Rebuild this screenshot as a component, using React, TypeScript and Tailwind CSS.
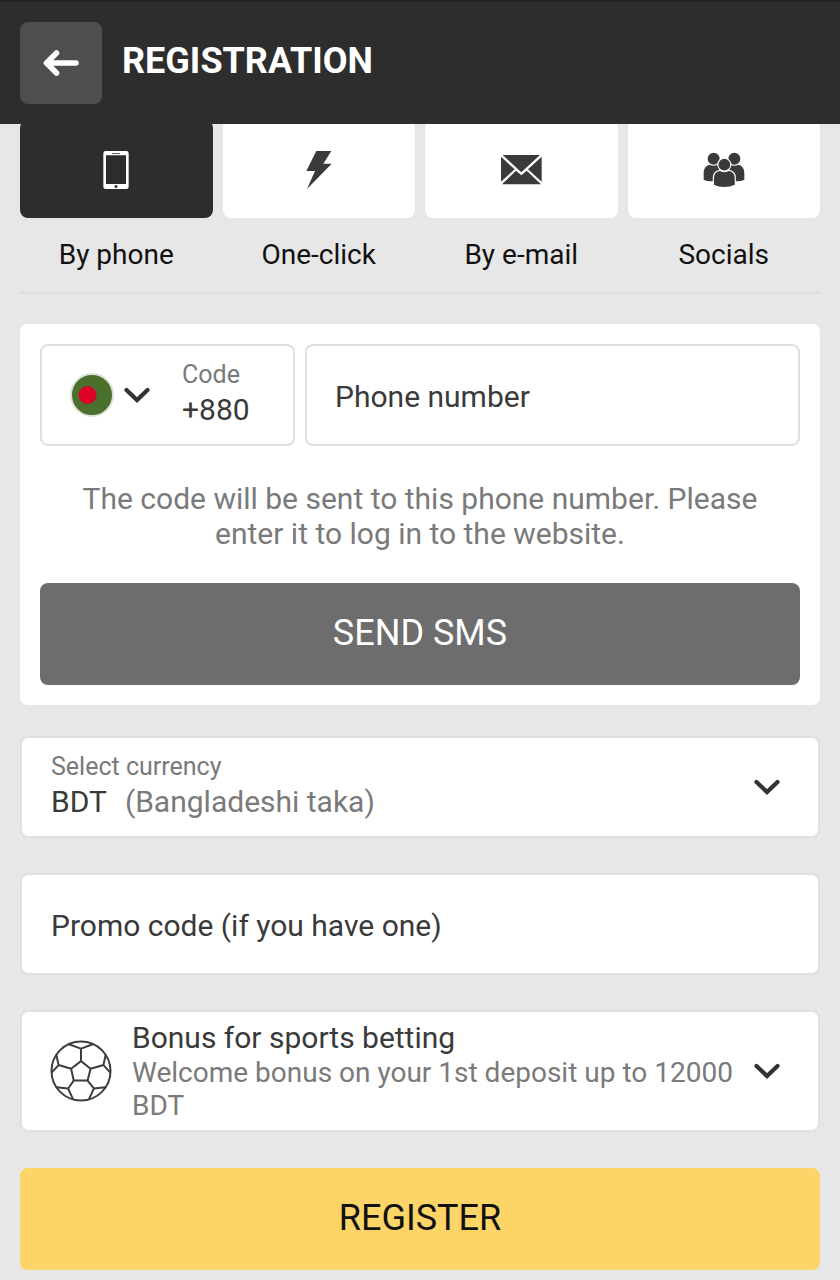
import { useState } from "react";
import type { ReactNode } from "react";

function ArrowIcon() {
  return (
    <svg width="36" height="26" viewBox="0 0 36 26" fill="none" aria-hidden="true">
      <path
        d="M33 13H3.500M13.500 3L3.500 13l10 10"
        stroke="white"
        strokeWidth="5.6"
        strokeLinecap="round"
        strokeLinejoin="round"
      />
    </svg>
  );
}

function ChevronIcon() {
  return (
    <svg
      className="shrink-0"
      width="26"
      height="16"
      viewBox="0 0 26 16"
      fill="none"
      aria-hidden="true"
    >
      <path d="M2.500 3L13 13L23.500 3" stroke="#333333" strokeWidth="4.2" strokeLinecap="round" />
    </svg>
  );
}

function PhoneIcon() {
  return (
    <svg width="26" height="38" viewBox="0 0 78 114" aria-hidden="true">
      <path
        fill="currentColor"
        fillRule="evenodd"
        d="M8 0h62a7 7 0 0 1 7 7v100a7 7 0 0 1-7 7H8a7 7 0 0 1-7-7V7a7 7 0 0 1 7-7ZM9 13v86h60V13ZM27 6v2h24V6ZM39 102a4.500 4.500 0 1 0 0 9a4.500 4.500 0 1 0 0-9Z"
      />
    </svg>
  );
}

function BoltIcon() {
  return (
    <svg width="26" height="38" viewBox="0 0 78 114" aria-hidden="true">
      <path fill="currentColor" d="M31 0H76L52 38H77L3 114L27 60H1Z" />
    </svg>
  );
}

function MailIcon() {
  return (
    <svg width="41" height="30" viewBox="0 0 123 90" aria-hidden="true">
      <path fill="currentColor" d="M5 0H117L61 52Z" />
      <path fill="currentColor" d="M0 5L41 43L0 80Z" />
      <path fill="currentColor" d="M122 5L81 43L122 80Z" />
      <path fill="currentColor" d="M45 47L61 61L77 47L120 88H3Z" />
    </svg>
  );
}

function PeopleIcon() {
  return (
    <svg width="42" height="36" viewBox="0 0 126 108" aria-hidden="true">
      <g fill="currentColor">
        <circle cx="32" cy="20" r="18" />
        <circle cx="94" cy="20" r="18" />
        <path d="M2 83V64C2 49 9 41 20 38Q32 44 44 38L64 60L82 38Q94 44 106 38C117 41 124 49 124 64V83Q110 90 92 87H34Q16 90 2 83Z" />
      </g>
      <g fill="currentColor" stroke="white" strokeWidth="3.5">
        <path d="M31 100V78C31 65 38 57 50 55Q64 63 78 55C90 57 97 65 97 78V100Q64 114 31 100Z" />
        <circle cx="64" cy="38" r="19.500" />
      </g>
    </svg>
  );
}

function BallIcon() {
  return (
    <svg
      className="shrink-0"
      width="62"
      height="62"
      viewBox="0 0 188 188"
      fill="none"
      stroke="#3d3d3d"
      strokeWidth="6"
      strokeLinejoin="round"
      aria-hidden="true"
    >
      <circle cx="94" cy="94" r="89.500" />
      <path d="M94 64L123 87L114 123H72L64 87Z" />
      <path d="M94 64V26M55 12L94 26L132 12" />
      <path d="M123 87L162 76M169 44L162 76L183 99" />
      <path d="M64 87L26 76M19 44L26 76L5 99" />
      <path d="M114 123L133 147M168 143L133 147L118 180" />
      <path d="M72 123L55 147M20 143L55 147L70 180" />
    </svg>
  );
}

function FlagIcon() {
  return (
    <svg className="shrink-0" width="44" height="44" viewBox="0 0 44 44" aria-hidden="true">
      <circle cx="22" cy="22" r="21" fill="#4b6f2c" stroke="#dde3d9" strokeWidth="2" />
      <circle cx="17.500" cy="22" r="9" fill="#dc0228" />
    </svg>
  );
}

const methods: { id: string; label: string; icon: ReactNode }[] = [
  { id: "phone", label: "By phone", icon: <PhoneIcon /> },
  { id: "click", label: "One-click", icon: <BoltIcon /> },
  { id: "email", label: "By e-mail", icon: <MailIcon /> },
  { id: "socials", label: "Socials", icon: <PeopleIcon /> },
];

const currencies = [
  { code: "BDT", name: "Bangladeshi taka" },
  { code: "USD", name: "US dollar" },
  { code: "EUR", name: "Euro" },
];

const bonuses = [
  {
    title: "Bonus for sports betting",
    text: "Welcome bonus on your 1st deposit up to 12000 BDT",
  },
  { title: "No bonus", text: "Continue without a bonus" },
];

export default function App() {
  const [method, setMethod] = useState("phone");
  const [currency, setCurrency] = useState(0);
  const [bonus, setBonus] = useState(0);

  return (
    <div className="min-h-screen bg-[#e7e7e7] font-['Roboto',sans-serif] text-[30px] leading-[35px] text-[#3a3a3a]">
      <header className="sticky top-0 z-10 flex items-center gap-5 border-t-2 border-[#222222] bg-[#2d2d2d] p-5">
        <button
          type="button"
          aria-label="Back"
          className="flex size-[82px] items-center justify-center rounded-lg bg-[#4e4e4e]"
        >
          <ArrowIcon />
        </button>
        <h1 className="pb-1 text-[36px] leading-[42px] font-bold text-white">REGISTRATION</h1>
      </header>

      <main className="-mt-1 px-5 pb-[10px]">
        <nav className="grid grid-cols-4 gap-[10px] border-b-2 border-[#dedede] pb-5">
          {methods.map((m) => (
            <button
              key={m.id}
              type="button"
              aria-pressed={method === m.id}
              onClick={() => setMethod(m.id)}
              className="flex flex-col gap-5 text-[28px] leading-[34px] text-[#111111]"
            >
              <span
                className={
                  method === m.id
                    ? "flex h-[98px] w-full items-center justify-center rounded-lg bg-[#2d2d2d] pt-0.5 text-white"
                    : "flex h-[98px] w-full items-center justify-center rounded-lg bg-white pt-0.5 text-[#3a3a3a]"
                }
              >
                {m.icon}
              </span>
              <span className="w-full text-center">{m.label}</span>
            </button>
          ))}
        </nav>

        <form onSubmit={(e) => e.preventDefault()}>
          <section className="mt-[30px] rounded-lg bg-white p-5">
            <div className="flex gap-[10px]">
              <div className="relative flex h-[102px] w-[255px] shrink-0 items-center rounded-lg border-2 border-[#e0e0e0] pl-7">
                <FlagIcon />
                <span className="ml-[10px]">
                  <ChevronIcon />
                </span>
                <div className="ml-8 flex flex-col pb-1.5">
                  <label htmlFor="code" className="text-[25px] text-[#7a7a7a]">
                    Code
                  </label>
                  <span>+880</span>
                </div>
                <select id="code" className="absolute inset-0 cursor-pointer opacity-0">
                  <option>+880</option>
                </select>
              </div>
              <input
                type="tel"
                aria-label="Phone number"
                placeholder="Phone number"
                className="h-[102px] min-w-0 flex-1 rounded-lg border-2 border-[#e0e0e0] px-7 pt-0.5 placeholder:text-[#3a3a3a]"
              />
            </div>
            <p className="mt-[35px] px-5 text-center text-[#7a7a7a]">
              The code will be sent to this phone number. Please enter it to log in to the website.
            </p>
            <button
              type="button"
              className="mt-8 h-[102px] w-full rounded-lg bg-[#6d6d6d] pb-0.5 text-[36px] text-white"
            >
              SEND SMS
            </button>
          </section>

          <div className="relative mt-[31px] flex h-[102px] items-center justify-between rounded-lg border-2 border-[#e0e0e0] bg-white pr-[38px] pl-[29px]">
            <div className="flex flex-col pb-1.5">
              <label htmlFor="currency" className="text-[25px] text-[#7a7a7a]">
                Select currency
              </label>
              <span className="flex gap-[18px]">
                {currencies[currency].code}
                <span className="text-[#7a7a7a]">({currencies[currency].name})</span>
              </span>
            </div>
            <ChevronIcon />
            <select
              id="currency"
              value={currency}
              onChange={(e) => setCurrency(Number(e.target.value))}
              className="absolute inset-0 cursor-pointer opacity-0"
            >
              {currencies.map((c, i) => (
                <option key={c.code} value={i}>
                  {c.code} ({c.name})
                </option>
              ))}
            </select>
          </div>

          <input
            type="text"
            aria-label="Promo code"
            placeholder="Promo code (if you have one)"
            className="mt-[35px] block h-[102px] w-full rounded-lg border-2 border-[#e0e0e0] bg-white px-[29px] pt-0.5 placeholder:text-[#3a3a3a]"
          />

          <div className="relative mt-[35px] flex items-center rounded-lg border-2 border-[#e0e0e0] bg-white py-2 pr-[38px] pl-7">
            <BallIcon />
            <div className="mr-5 ml-5 min-w-0 flex-1">
              <label htmlFor="bonus" className="block">
                {bonuses[bonus].title}
              </label>
              <p className="mt-px text-[28px] leading-[33px] text-[#7a7a7a]">{bonuses[bonus].text}</p>
            </div>
            <ChevronIcon />
            <select
              id="bonus"
              value={bonus}
              onChange={(e) => setBonus(Number(e.target.value))}
              className="absolute inset-0 cursor-pointer opacity-0"
            >
              {bonuses.map((b, i) => (
                <option key={b.title} value={i}>
                  {b.title}
                </option>
              ))}
            </select>
          </div>

          <button
            type="submit"
            className="mt-9 h-[102px] w-full rounded-lg bg-[#fdd468] pb-0.5 text-[36px] text-[#111111]"
          >
            REGISTER
          </button>
        </form>
      </main>
    </div>
  );
}
